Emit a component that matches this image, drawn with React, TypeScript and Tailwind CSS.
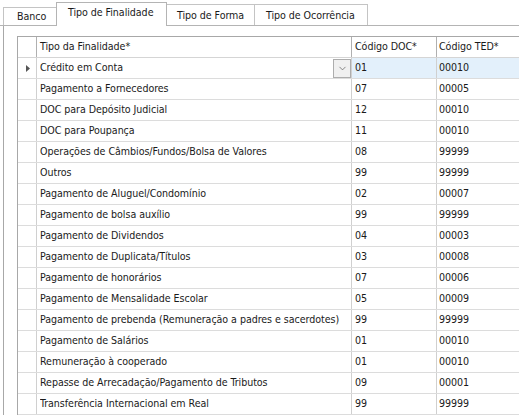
import { ChevronDown } from 'lucide-react';

const rows: [string, string, string][] = [
  ['Crédito em Conta', '01', '00010'],
  ['Pagamento a Fornecedores', '07', '00005'],
  ['DOC para Depósito Judicial', '12', '00010'],
  ['DOC para Poupança', '11', '00010'],
  ['Operações de Câmbios/Fundos/Bolsa de Valores', '08', '99999'],
  ['Outros', '99', '99999'],
  ['Pagamento de Aluguel/Condomínio', '02', '00007'],
  ['Pagamento de bolsa auxílio', '99', '99999'],
  ['Pagamento de Dividendos', '04', '00003'],
  ['Pagamento de Duplicata/Títulos', '03', '00008'],
  ['Pagamento de honorários', '07', '00006'],
  ['Pagamento de Mensalidade Escolar', '05', '00009'],
  ['Pagamento de prebenda (Remuneração a padres e sacerdotes)', '99', '99999'],
  ['Pagamento de Salários', '01', '00010'],
  ['Remuneração à cooperado', '01', '00010'],
  ['Repasse de Arrecadação/Pagamento de Tributos', '09', '00001'],
  ['Transferência Internacional em Real', '99', '99999'],
];

export default function App() {
  return (
    <div
      className="w-[519px] h-[415px] bg-white overflow-hidden text-[10.6px] tracking-[-0.05px] text-[#1a1a1a]"
      style={{ fontFamily: "Tahoma, 'DejaVu Sans Condensed', 'DejaVu Sans', sans-serif" }}
    >
      {/* tabs */}
      <div className="flex items-end h-[26px] pl-[3px] border-b border-[#b4b4b4]">
        <div className="w-[54px] h-[18px] border border-b-0 border-[#c4c4c4] bg-white flex items-center pl-[13px]">
          Banco
        </div>
        <div className="relative z-10 -ml-px -mb-px w-[111px] h-[24px] border border-b-0 border-[#b4b4b4] bg-white flex items-start pt-[2px] pl-[11px]">
          Tipo de Finalidade
        </div>
        <div className="-ml-px w-[89px] h-[21px] border border-b-0 border-[#c4c4c4] bg-white flex items-center pt-[2px] pl-[10px]">
          Tipo de Forma
        </div>
        <div className="-ml-px w-[114px] h-[21px] border border-b-0 border-[#c4c4c4] bg-white flex items-center pt-[2px] pl-[11px]">
          Tipo de Ocorrência
        </div>
      </div>

      {/* tab page */}
      <div className="ml-[3px] h-[400px] border-l border-[#a8a8a8] pl-[13px] pt-[10px]">
        <div className="border-l border-t border-[#a8a8a8]">
          <div className="flex h-[21px] border-b border-[#d5d5d5]">
            <div className="w-[19px] border-r border-[#b0b0b0]" />
            <div className="w-[315px] border-r border-[#b0b0b0] flex items-center pl-[3px]">Tipo da Finalidade*</div>
            <div className="w-[85px] border-r border-[#b0b0b0] flex items-center pl-[3px]">Código DOC*</div>
            <div className="flex-1 flex items-center pl-[2px]">Código TED*</div>
          </div>
          {rows.map(([name, doc, ted], i) => (
            <div key={name} className="flex h-[21px] border-b border-[#dcdcdc]">
              <div className="w-[19px] border-r border-[#d0d0d0] flex items-center justify-center">
                {i === 0 && (
                  <svg width="4" height="7" viewBox="0 0 4 7" className="ml-px">
                    <path d="M0 0 L4 3.5 L0 7 Z" fill="#555" />
                  </svg>
                )}
              </div>
              <div className="w-[315px] border-r border-[#d0d0d0] flex items-center pl-[3px]">
                <span className="flex-1 whitespace-nowrap overflow-hidden">{name}</span>
                {i === 0 && (
                  <div className="w-[18px] h-[19px] mt-px border border-[#adadad] bg-[#f0f0f0] flex items-center justify-center">
                    <ChevronDown size={11} strokeWidth={1.6} className="text-[#606060]" />
                  </div>
                )}
              </div>
              <div
                className={`w-[85px] border-r border-[#d0d0d0] flex items-center pl-[3px] ${
                  i === 0 ? 'bg-[#e3f0fb]' : ''
                }`}
              >
                {doc}
              </div>
              <div className={`flex-1 flex items-center pl-[2px] ${i === 0 ? 'bg-[#e3f0fb]' : ''}`}>{ted}</div>
            </div>
          ))}
        </div>
      </div>
    </div>
  );
}
